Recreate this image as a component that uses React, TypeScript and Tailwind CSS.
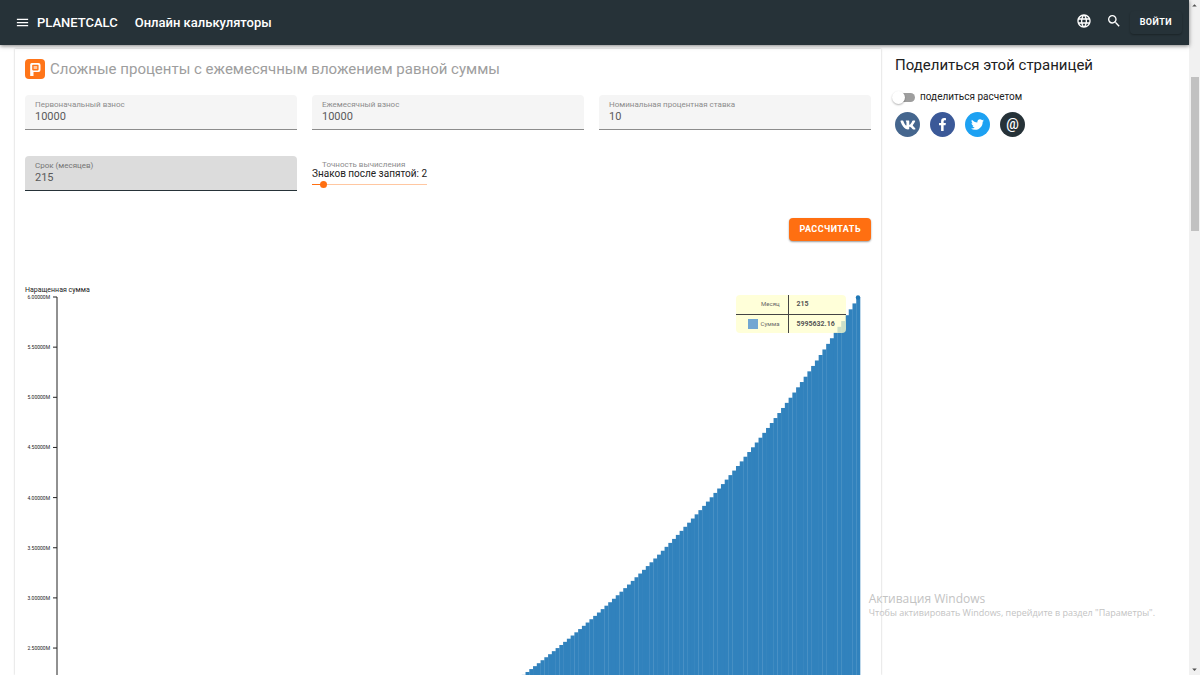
import { useId, useState, type ReactNode } from 'react';
import { clsx } from 'clsx';
import { FaFacebookF, FaTwitter, FaVk } from 'react-icons/fa';
import { MdArrowDropDown, MdArrowDropUp, MdLanguage, MdMenu, MdSearch } from 'react-icons/md';

const MONTHS = 215;
const RATE = 0.1 / 12;
const PAYMENT = 10000;

// value at the end of month m, payments made at the start of each month
const valueAt = (m: number) => (PAYMENT * (1 + RATE) * (Math.pow(1 + RATE, m) - 1)) / RATE;

const months = Array.from({ length: MONTHS }, (_, i) => i + 1);
const ticks = [6, 5.5, 5, 4.5, 4, 3.5, 3, 2.5];

// chart geometry, in viewBox units
const CHART = { width: 846, height: 610, axis: 32, left: 27, right: 835, top: 7, perMillion: 100.3 };
const barStep = (CHART.right - CHART.left) / MONTHS;
const yOf = (millions: number) => CHART.top + (6 - millions) * CHART.perMillion;

const Field = ({ label, defaultValue, active }: { label: string; defaultValue: string; active?: boolean }) => {
  const id = useId();
  return (
    <div
      className={clsx(
        'flex h-[35px] flex-col rounded-t-sm border-b px-[10px] pt-1',
        active ? 'border-[#263238] bg-[#dcdcdc]' : 'border-[#8c8c8c] bg-[#f5f5f5]'
      )}
    >
      <label htmlFor={id} className={clsx('text-[8px] leading-[11px]', active ? 'text-[#757575]' : 'text-[#8c8c8c]')}>
        {label}
      </label>
      <input
        id={id}
        type="text"
        defaultValue={defaultValue}
        className="w-full bg-transparent text-[11px] leading-[13px] text-[#5a5a5a] outline-none"
      />
    </div>
  );
};

const PrecisionSlider = () => {
  const id = useId();
  const [precision, setPrecision] = useState(2);
  return (
    <div className="w-[115px] pt-1">
      <label htmlFor={id} className="block pl-[10px] text-[8px] leading-[9px] text-[#8c8c8c]">
        Точность вычисления
      </label>
      <div className="text-[10px] leading-[10px] whitespace-nowrap text-[#212121]">Знаков после запятой: {precision}</div>
      <div className="relative mt-[2px] h-2">
        <div className="absolute inset-x-0 top-[3px] h-px bg-[#ffc7a1]">
          <div className="h-px bg-[#ff6f11]" style={{ width: `${precision * 5}%` }} />
        </div>
        <input
          id={id}
          type="range"
          min={0}
          max={20}
          value={precision}
          onChange={(e) => setPrecision(Number(e.target.value))}
          className="absolute -left-[3px] top-0 h-[7px] w-[calc(100%+6px)] cursor-pointer appearance-none bg-transparent [&::-webkit-slider-thumb]:size-[7px] [&::-webkit-slider-thumb]:appearance-none [&::-webkit-slider-thumb]:rounded-full [&::-webkit-slider-thumb]:bg-[#ff6f11]"
        />
      </div>
    </div>
  );
};

const Logo = () => (
  <svg viewBox="0 0 20 20" className="size-5 shrink-0" aria-hidden="true">
    <rect width="20" height="20" rx="4" fill="#ff7519" />
    <path d="M5.2 17 V5.5 Q5.2 4 6.7 4 H13.5 Q15.5 4 15.5 6 V11 Q15.5 13 13.5 13 H8.5 V17 Z" fill="#fff" />
    <rect x="7.2" y="5.8" width="6.4" height="5.6" rx="0.8" fill="#ff7519" />
    <rect x="8.6" y="7.1" width="3.6" height="3" rx="0.4" fill="#ffc7a1" />
  </svg>
);

const GrowthChart = () => (
  <svg viewBox={`0 0 ${CHART.width} ${CHART.height}`} className="block w-full" role="img" aria-label="Наращенная сумма">
    <path d={`M${CHART.axis} ${CHART.top}V${CHART.height}`} stroke="#222" />
    {ticks.map((t) => (
      <g key={t}>
        <path d={`M28 ${yOf(t)}H${CHART.axis}`} stroke="#222" />
        <text x="25" y={yOf(t) + 2} textAnchor="end" fontSize="5" fill="#222">
          {t.toFixed(5)}M
        </text>
      </g>
    ))}
    {months.map((m) => {
      const y = yOf(valueAt(m) / 1e6);
      return (
        <rect
          key={m}
          x={CHART.left + (m - 1) * barStep}
          y={y}
          // slight overlap so that no white seam shows between bars
          width={barStep + 0.3}
          height={Math.max(CHART.height - y, 0)}
          fill="#3182bd"
        />
      );
    })}
    <circle cx={CHART.right - 2} cy={yOf(valueAt(MONTHS) / 1e6)} r="2.2" fill="#1f77b4" />
  </svg>
);

const ChartTooltip = () => (
  <table className="absolute top-[10px] right-[25px] w-[110px] border-collapse overflow-hidden rounded-sm bg-[#ffffcc]/75 text-[7px] leading-[10px]">
    <tbody>
      <tr className="h-[19px] border-b border-[#444]">
        <th scope="row" className="w-[52px] border-r border-[#444] pr-2 text-right text-[6px] font-normal text-[#666]">
          Месяц
        </th>
        <td className="pl-2 font-bold text-[#555]">215</td>
      </tr>
      <tr className="h-[19px]">
        <th scope="row" className="border-r border-[#444] pr-2 text-[6px] font-normal text-[#666]">
          <span className="flex items-center justify-end gap-[3px]">
            <span className="size-[10px] bg-[#72a7d2]" />
            Сумма
          </span>
        </th>
        <td className="pl-2 font-bold text-[#555]">5995632.16</td>
      </tr>
    </tbody>
  </table>
);

const ShareLink = ({ label, color, children }: { label: string; color: string; children: ReactNode }) => (
  <a href="#share" aria-label={label} className={clsx('flex size-[25px] items-center justify-center rounded-full text-white', color)}>
    {children}
  </a>
);

const Header = () => (
  <header className="relative z-10 flex h-[45px] shrink-0 items-center bg-[#263238] pr-[7px] pl-[15px] text-white shadow-[0_1px_4px_rgba(0,0,0,0.5)]">
    <button type="button" aria-label="Меню">
      <MdMenu className="size-[15px]" />
    </button>
    <a href="#home" className="ml-[7px] text-[13px] font-medium">PLANETCALC</a>
    <a href="#calculators" className="ml-[17px] text-[13px] font-medium">Онлайн калькуляторы</a>
    <div className="ml-auto flex items-center pb-1">
      <button type="button" aria-label="Язык">
        <MdLanguage className="size-4" />
      </button>
      <button type="button" aria-label="Поиск" className="ml-[14px]">
        <MdSearch className="size-4" />
      </button>
      <button
        type="button"
        className="mt-1 ml-2 h-[23px] rounded-sm px-[10px] text-[9px] font-bold tracking-wider uppercase shadow-[0_1px_2px_rgba(0,0,0,0.3)]"
      >
        Войти
      </button>
    </div>
  </header>
);

const Calculator = () => (
  <main className="mt-1 min-w-0 flex-1 px-[10px] shadow-[0_0_2px_rgba(0,0,0,0.25)]">
    <h1 className="flex items-center gap-[5px] pt-[10px] text-[15px] leading-5 text-[#9e9e9e]">
      <Logo />
      Сложные проценты с ежемесячным вложением равной суммы
    </h1>
    <form onSubmit={(e) => e.preventDefault()}>
      <div className="mt-4 grid grid-cols-3 gap-x-[15px] gap-y-[26px]">
        <Field label="Первоначальный взнос" defaultValue="10000" />
        <Field label="Ежемесячный взнос" defaultValue="10000" />
        <Field label="Номинальная процентная ставка" defaultValue="10" />
        <Field label="Срок (месяцев)" defaultValue="215" active />
        <PrecisionSlider />
      </div>
      <div className="mt-[27px] flex justify-end">
        <button
          type="submit"
          className="h-[23px] rounded-sm bg-[#ff6f11] px-[10px] text-[9px] font-bold tracking-wider text-white uppercase shadow-[0_1px_2px_rgba(0,0,0,0.4)]"
        >
          Рассчитать
        </button>
      </div>
    </form>
    <section className="relative mt-[44px]">
      <h2 className="h-[5px] text-[7px] leading-[10px] text-[#222]">Наращенная сумма</h2>
      <GrowthChart />
      <ChartTooltip />
    </section>
  </main>
);

const Sidebar = () => (
  <aside className="w-[308px] shrink-0 pt-[10px] pl-[14px]">
    <h2 className="text-[15px] leading-5 text-[#212121]">Поделиться этой страницей</h2>
    <label className="mt-[14px] flex cursor-pointer items-center text-[10px] leading-4 text-[#212121]">
      <input type="checkbox" role="switch" className="peer sr-only" />
      <span className="relative mr-[5px] ml-[2px] h-[9px] w-[18px] rounded-full bg-[#9e9e9e] before:absolute before:-top-[2px] before:-left-[5px] before:size-[13px] before:rounded-full before:bg-white before:shadow-[0_1px_2px_rgba(0,0,0,0.3)] peer-checked:bg-[#ffb784] peer-checked:before:left-[10px]" />
      поделиться расчетом
    </label>
    <div className="mt-[7px] flex gap-[10px]">
      <ShareLink label="ВКонтакте" color="bg-[#45668e]">
        <FaVk className="size-4" />
      </ShareLink>
      <ShareLink label="Facebook" color="bg-[#3b5998]">
        <FaFacebookF className="size-[13px]" />
      </ShareLink>
      <ShareLink label="Twitter" color="bg-[#1da1f2]">
        <FaTwitter className="size-[13px]" />
      </ShareLink>
      <ShareLink label="Электронная почта" color="bg-[#263238]">
        <span className="pb-[2px] text-[14px] leading-4 font-medium">@</span>
      </ShareLink>
    </div>
  </aside>
);

const Scrollbar = () => (
  <div className="flex w-[11px] shrink-0 flex-col items-center bg-[#f1f1f1] text-[#505050]" aria-hidden="true">
    <MdArrowDropUp className="size-[11px]" />
    <div className="mt-[66px] h-[154px] w-2 bg-[#c1c1c1]" />
    <MdArrowDropDown className="mt-auto size-[11px]" />
  </div>
);

export default function App() {
  return (
    <div className="relative flex h-screen overflow-hidden bg-white font-['Roboto',sans-serif]">
      <div className="flex min-w-0 flex-1 flex-col">
        <Header />
        <div className="flex min-h-0 flex-1 overflow-hidden pl-[15px]">
          <Calculator />
          <Sidebar />
        </div>
      </div>
      <Scrollbar />
      <div className="pointer-events-none absolute right-[45px] bottom-[56px] z-20 font-['Open_Sans',sans-serif] whitespace-nowrap text-[#c3c3c3]">
        <p className="text-[12px] leading-4">Активация Windows</p>
        <p className="text-[9px] leading-3">Чтобы активировать Windows, перейдите в раздел "Параметры".</p>
      </div>
    </div>
  );
}
